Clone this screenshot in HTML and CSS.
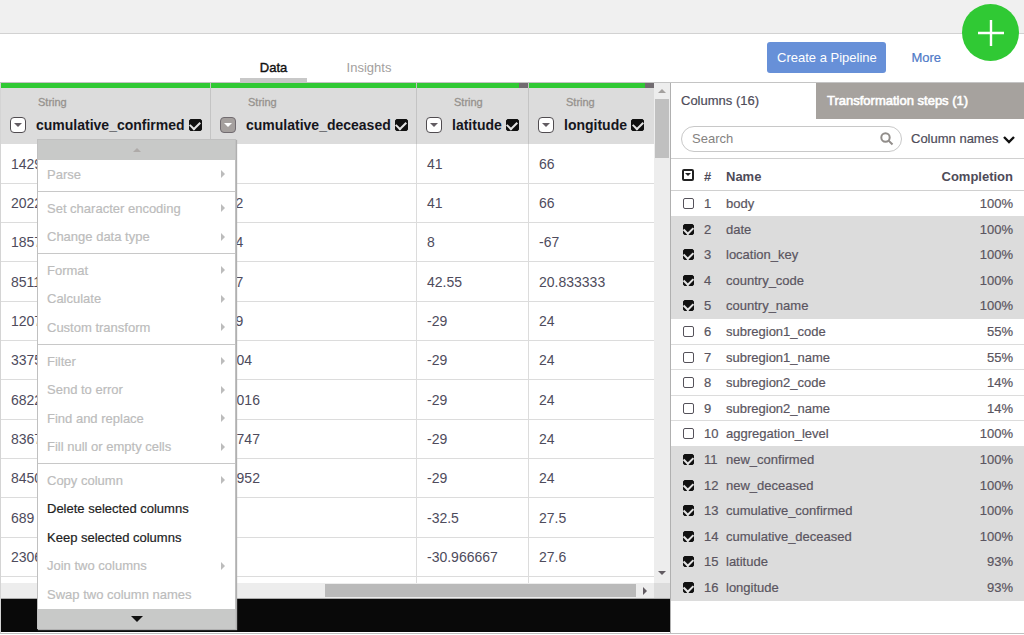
FILE: index.html
```html
<!DOCTYPE html>
<html lang="en">
<head>
<meta charset="utf-8">
<title>Data preparation</title>
<link rel="stylesheet" href="styles.css">
</head>
<body>
<div class="page">
  <div class="topbar"></div>
  <header class="header">
    <nav class="tabs">
      <a class="tab tab-active" href="#data">Data</a>
      <a class="tab" href="#insights">Insights</a>
    </nav>
    <div class="actions">
      <button class="primary" type="button">Create a Pipeline</button>
      <a class="more" href="#more">More</a>
    </div>
  </header>
  <button class="add" type="button" aria-label="Add"><svg width="26" height="26" viewBox="0 0 26 26"><path d="M13 0V26M0 13H26" stroke="#fff" stroke-width="2.4"/></svg></button>

  <main class="main">
    <section class="left">
      <div class="grid-area">
        <table class="grid">
          <colgroup><col class="c1"><col class="c2"><col class="c3"><col class="c4"></colgroup>
          <thead>
            <tr>
              <th><div class="quality"></div><div class="type">String</div><div class="head"><button class="drop" type="button" aria-label="cumulative_confirmed menu"></button><label for="h1">cumulative_confirmed</label><input id="h1" class="check" type="checkbox" checked></div></th>
              <th><div class="quality"></div><div class="type">String</div><div class="head"><button class="drop drop-open" type="button" aria-label="cumulative_deceased menu"></button><label for="h2">cumulative_deceased</label><input id="h2" class="check" type="checkbox" checked></div></th>
              <th><div class="quality partial"></div><div class="type">String</div><div class="head"><button class="drop" type="button" aria-label="latitude menu"></button><label for="h3">latitude</label><input id="h3" class="check" type="checkbox" checked></div></th>
              <th><div class="quality partial"></div><div class="type">String</div><div class="head"><button class="drop" type="button" aria-label="longitude menu"></button><label for="h4">longitude</label><input id="h4" class="check" type="checkbox" checked></div></th>
            </tr>
          </thead>
          <tbody>
            <tr><td>1429</td><td></td><td>41</td><td>66</td></tr>
            <tr><td>2022</td><td>112</td><td>41</td><td>66</td></tr>
            <tr><td>1857</td><td>114</td><td>8</td><td>-67</td></tr>
            <tr><td>8511</td><td>117</td><td>42.55</td><td>20.833333</td></tr>
            <tr><td>1207</td><td>119</td><td>-29</td><td>24</td></tr>
            <tr><td>3375</td><td>1204</td><td>-29</td><td>24</td></tr>
            <tr><td>6822</td><td>12016</td><td>-29</td><td>24</td></tr>
            <tr><td>8367</td><td>12747</td><td>-29</td><td>24</td></tr>
            <tr><td>8450</td><td>12952</td><td>-29</td><td>24</td></tr>
            <tr><td>689</td><td></td><td>-32.5</td><td>27.5</td></tr>
            <tr><td>2306</td><td></td><td>-30.966667</td><td>27.6</td></tr>
          </tbody>
          <tfoot><tr><td></td><td></td><td></td><td></td></tr></tfoot>
        </table>
        <div class="vscroll"><i class="arrow up"></i><div class="vthumb"></div><i class="arrow down"></i></div>
      </div>
      <div class="hscroll"><div class="htrack"><div class="hthumb"></div></div><i class="arrow right"></i><div class="corner"></div></div>
      <div class="console"></div>

      <div class="menu">
        <button class="band" type="button" aria-label="Scroll up"><i class="arrow faint up"></i></button>
        <div class="group"><button type="button" disabled>Parse<i class="arrow right"></i></button></div>
        <div class="group"><button type="button" disabled>Set character encoding<i class="arrow right"></i></button><button type="button" disabled>Change data type<i class="arrow right"></i></button></div>
        <div class="group"><button type="button" disabled>Format<i class="arrow right"></i></button><button type="button" disabled>Calculate<i class="arrow right"></i></button><button type="button" disabled>Custom transform<i class="arrow right"></i></button></div>
        <div class="group"><button type="button" disabled>Filter<i class="arrow right"></i></button><button type="button" disabled>Send to error<i class="arrow right"></i></button><button type="button" disabled>Find and replace<i class="arrow right"></i></button><button type="button" disabled>Fill null or empty cells<i class="arrow right"></i></button></div>
        <div class="group"><button type="button" disabled>Copy column<i class="arrow right"></i></button><button type="button">Delete selected columns</button><button type="button">Keep selected columns</button><button type="button" disabled>Join two columns<i class="arrow right"></i></button><button type="button" disabled>Swap two column names</button></div>
        <button class="band" type="button" aria-label="Scroll down"><i class="arrow big down"></i></button>
      </div>
    </section>

    <aside class="panel">
      <div class="panel-tabs"><a class="ptab" href="#columns">Columns (16)</a><a class="ptab ptab-steps" href="#steps">Transformation steps (1)</a></div>
      <div class="filter">
        <div class="search"><input type="text" placeholder="Search" aria-label="Search"><svg width="14" height="14" viewBox="0 0 14 14"><circle cx="5.5" cy="5.5" r="4.2"/><path d="M8.6 8.6L12.5 12.5"/></svg></div>
        <div class="select"><select aria-label="Search in"><option>Column names</option></select><svg width="12" height="9" viewBox="0 0 12 9"><path d="M1 2L6 7L11 2"/></svg></div>
      </div>
      <table class="columns">
        <thead><tr><th class="k1"><button class="pick" type="button" aria-label="Selection menu"></button></th><th class="k2">#</th><th>Name</th><th class="k4">Completion</th></tr></thead>
        <tbody>
          <tr><td><input class="check" type="checkbox" aria-label="body"></td><td>1</td><td>body</td><td>100%</td></tr>
          <tr class="sel"><td><input class="check" type="checkbox" aria-label="date" checked></td><td>2</td><td>date</td><td>100%</td></tr>
          <tr class="sel"><td><input class="check" type="checkbox" aria-label="location_key" checked></td><td>3</td><td>location_key</td><td>100%</td></tr>
          <tr class="sel"><td><input class="check" type="checkbox" aria-label="country_code" checked></td><td>4</td><td>country_code</td><td>100%</td></tr>
          <tr class="sel"><td><input class="check" type="checkbox" aria-label="country_name" checked></td><td>5</td><td>country_name</td><td>100%</td></tr>
          <tr><td><input class="check" type="checkbox" aria-label="subregion1_code"></td><td>6</td><td>subregion1_code</td><td>55%</td></tr>
          <tr><td><input class="check" type="checkbox" aria-label="subregion1_name"></td><td>7</td><td>subregion1_name</td><td>55%</td></tr>
          <tr><td><input class="check" type="checkbox" aria-label="subregion2_code"></td><td>8</td><td>subregion2_code</td><td>14%</td></tr>
          <tr><td><input class="check" type="checkbox" aria-label="subregion2_name"></td><td>9</td><td>subregion2_name</td><td>14%</td></tr>
          <tr><td><input class="check" type="checkbox" aria-label="aggregation_level"></td><td>10</td><td>aggregation_level</td><td>100%</td></tr>
          <tr class="sel"><td><input class="check" type="checkbox" aria-label="new_confirmed" checked></td><td>11</td><td>new_confirmed</td><td>100%</td></tr>
          <tr class="sel"><td><input class="check" type="checkbox" aria-label="new_deceased" checked></td><td>12</td><td>new_deceased</td><td>100%</td></tr>
          <tr class="sel"><td><input class="check" type="checkbox" aria-label="cumulative_confirmed" checked></td><td>13</td><td>cumulative_confirmed</td><td>100%</td></tr>
          <tr class="sel"><td><input class="check" type="checkbox" aria-label="cumulative_deceased" checked></td><td>14</td><td>cumulative_deceased</td><td>100%</td></tr>
          <tr class="sel"><td><input class="check" type="checkbox" aria-label="latitude" checked></td><td>15</td><td>latitude</td><td>93%</td></tr>
          <tr class="sel"><td><input class="check" type="checkbox" aria-label="longitude" checked></td><td>16</td><td>longitude</td><td>93%</td></tr>
        </tbody>
      </table>
    </aside>
  </main>
</div>
</body>
</html>
```

FILE: styles.css
```css
* { box-sizing: border-box; }
body { margin: 0; background: #fff; color: #4e4b58; font: 13px "Liberation Sans", Arial, sans-serif; }
button, input, select { font: inherit; color: inherit; margin: 0; }
button { border: 0; padding: 0; background: none; }
a { color: inherit; text-decoration: none; }
table { border-collapse: separate; border-spacing: 0; table-layout: fixed; width: 100%; }
th, td { padding: 0; text-align: left; }

.page { position: relative; display: flex; flex-direction: column; min-height: 100vh; padding-bottom: 1px; }
.topbar { height: 34px; background: #f0f0f0; border-bottom: 1px solid #d2d2d2; }
.header { display: flex; justify-content: space-between; height: 49px; padding: 0 83px 0 240px; border-bottom: 1px solid #c4c4c4; }
.tabs { display: flex; align-items: flex-end; gap: 24px; }
.tab { width: 76px; height: 26px; line-height: 24px; text-align: center; color: #a3a09e; border-bottom: 4px solid transparent; }
.tab-active { width: 67px; color: #111; border-color: #c8c8c8; -webkit-text-stroke: 0.4px #111; }
.actions { display: flex; align-items: center; gap: 25px; padding-bottom: 1px; }
.primary { width: 119px; height: 31px; border-radius: 3px; background: #6790d8; color: #fff; }
.more { color: #4f7ac8; -webkit-text-stroke: 0.2px #4f7ac8; }
.add { position: absolute; right: 5px; top: 4px; width: 57px; height: 57px; border-radius: 50%; background: #30c934; display: flex; align-items: center; justify-content: center; }

.main { display: flex; flex: 1; border-bottom: 1px solid #c0c0c0; }
.left { position: relative; display: flex; flex-direction: column; flex: 1; min-width: 0; padding-bottom: 1px; border-left: 1px solid #d4d4d4; }
.grid-area { display: flex; }
.grid { flex: 1; }
.c1 { width: 210px; }
.c2 { width: 206px; }
.c3 { width: 112px; }
.grid th { height: 61px; background: #dcdcdc; vertical-align: top; border-right: 1px solid #c4c4c4; color: #16161c; }
.grid td { height: 39px; padding-left: 10px; border-right: 1px solid #dcdcdc; border-bottom: 1px solid #dcdcdc; font-size: 14px; color: #4e4b5c; }
.grid tbody tr:nth-child(3n+1) td { height: 40px; }
.grid tfoot td { height: 6px; border-bottom: 0; }
.grid th:last-child, .grid td:last-child { border-right: 0; }
.quality { height: 5px; background: #30c934; }
.partial { border-right: 9px solid #716b70; }
.type { height: 26px; padding-left: 37px; line-height: 28px; font-size: 11px; color: #96928e; font-weight: 400; -webkit-text-stroke: 0.3px #96928e; }
.head { display: flex; align-items: center; height: 22px; padding-left: 9px; font-size: 14px; font-weight: 700; }
.head label { margin: 0 4px 0 10px; white-space: nowrap; }
.drop, .pick { display: flex; align-items: center; justify-content: center; width: 16px; height: 16px; background: #fff; border: 1px solid #504c50; border-radius: 4px; }
.drop::after, .pick::after { content: ""; border: 4px solid transparent; border-top-color: #625c62; border-bottom: 0; }
.drop-open { background: #a5a09e; border-color: #716b70; }
.drop-open::after { border-top-color: #fff; }
.check { appearance: none; flex: none; display: flex; align-items: flex-start; justify-content: center; width: 11px; height: 11px; border: 1px solid #55525a; border-radius: 2px; background: #fff; }
.check:checked { border-color: #111; background: #111; }
.check:checked::before { content: ""; width: 8px; height: 5px; margin-top: 1px; border: solid #e4e4e4; border-width: 0 0 2px 2px; transform: rotate(-45deg); }
.head .check { width: 13px; height: 12px; }

.arrow { flex: none; width: 0; height: 0; border: 4px solid transparent; color: #625c62; }
.up { border-bottom-color: currentColor; border-top: 0; }
.down { border-top-color: currentColor; border-bottom: 0; }
.right { border-left-color: currentColor; border-right: 0; }
.vscroll { display: flex; flex-direction: column; align-items: center; width: 16px; padding: 6px 0 8px; background: #ededed; }
.vscroll .up { color: #a3a09e; }
.vscroll .down { margin-top: auto; }
.vthumb { width: 14px; height: 59px; margin-top: 6px; background: #c0c0c0; }
.hscroll { display: flex; align-items: center; height: 16px; background: #ededed; border-bottom: 1px solid #aaa; }
.htrack { flex: 1; display: flex; justify-content: flex-end; }
.hthumb { width: 49%; height: 13px; background: #bababa; }
.hscroll .right { margin: 0 7px; }
.corner { width: 16px; height: 15px; background: #dcdcdc; }
.console { flex: 1; background: #090909; }

.menu { position: absolute; left: 36px; top: 56px; width: 199px; background: #fff; border: 1px solid #c0c0c0; border-bottom: 0; box-shadow: 1px 1px 1px #b0b0b0; }
.band { display: flex; align-items: center; justify-content: center; width: 100%; height: 20px; background: #c8c9c8; }
.faint { color: #aeaaa8; }
.big { border-width: 6px; color: #111; }
.big.down { border-bottom: 0; }
.group { padding: 2px 0; border-bottom: 1px solid #c8c8c8; }
.group:nth-child(2) { padding-top: 0; }
.group:nth-last-child(2) { padding-bottom: 0; border: 0; }
.group button { display: flex; align-items: center; justify-content: space-between; width: 100%; height: 29px; padding: 0 10px 1px 9px; color: #222; -webkit-text-stroke: 0.2px; }
.group button:nth-child(even) { height: 28px; }
.group button:disabled { color: #bcbcbc; }
.group .arrow { color: #bcbcbc; }

.panel { width: 354px; border-left: 1px solid #b0b0b0; }
.panel-tabs { display: flex; height: 36px; line-height: 36px; }
.ptab { width: 145px; padding-left: 10px; -webkit-text-stroke: 0.2px; }
.ptab-steps { flex: 1; padding-left: 11px; background: #a6a29e; color: #fff; -webkit-text-stroke: 0.6px #fff; }
.filter { display: flex; justify-content: space-between; align-items: center; height: 40px; padding: 0 9px 0 10px; border-bottom: 1px solid #d0d0d0; }
.search { display: flex; align-items: center; width: 221px; height: 26px; padding: 0 7px 0 9px; border: 1px solid #c8c8c8; border-radius: 13px; }
.search input { flex: 1; min-width: 0; border: 0; padding: 0 1px; outline: 0; background: none; }
.search input::placeholder { color: #85827f; opacity: 1; }
.search svg { fill: none; stroke: #918d8a; stroke-width: 2; }
.select { position: relative; width: 104px; }
.select select { appearance: none; width: 100%; border: 0; padding: 0; background: none; -webkit-text-stroke: 0.2px; }
.select svg { position: absolute; right: 0; top: 4px; fill: none; stroke: #111; stroke-width: 2.4; pointer-events: none; }
.columns th { height: 32px; padding: 3px 0 0; border-bottom: 1px solid #d0d0d0; }
.columns td { height: 26px; border-bottom: 1px solid #dcdcdc; color: #5a5560; -webkit-text-stroke: 0.2px; }
.columns tbody tr:nth-child(5n+2) td, .columns tbody tr:nth-child(5n+4) td { height: 25px; }
.columns .sel td { background: #dcdcdc; }
.columns th:first-child { width: 33px; padding: 0 0 0 11px; }
.columns td:first-child { padding-left: 12px; }
.columns .k2 { width: 22px; }
.columns .k4 { width: 100px; }
.columns th:last-child, .columns td:last-child { text-align: right; padding-right: 11px; }
.pick { width: 12px; height: 12px; border: 2px solid #222; border-radius: 2px; }
.pick::after { border-width: 3px; border-bottom: 0; border-top-color: #222; }
```
